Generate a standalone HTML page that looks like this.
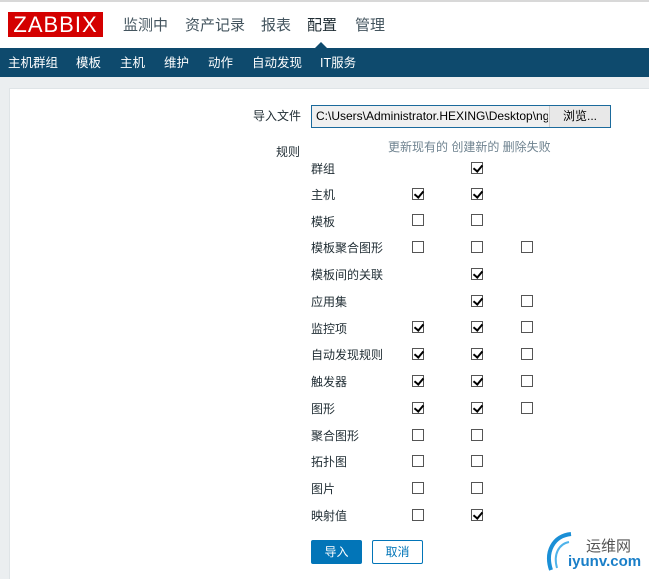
<!DOCTYPE html>
<html><head><meta charset="utf-8"><style>
*{margin:0;padding:0;box-sizing:border-box}
body{width:649px;height:579px;overflow:hidden;background:#ebeef0;font-family:"Liberation Sans","Noto Sans CJK SC",sans-serif;font-size:12px;color:#1f2c33;position:relative}
.a{position:absolute;white-space:nowrap}
.top{position:absolute;left:0;top:0;width:649px;height:48px;background:#fff;border-top:2px solid #d8d8d8}
.logo{left:8px;top:12px;width:95px;height:25px;background:#d40000;color:#fff;font-size:22px;line-height:25px;text-align:center;letter-spacing:1px}
.m{top:14px;font-size:15px;color:#44555f}
.nav{position:absolute;left:0;top:48px;width:649px;height:29px;background:#0e4a6d}
.n{top:52px;color:#fff;font-size:12.5px}
.panel{position:absolute;left:9px;top:88px;width:640px;height:491px;background:#fff;border:1px solid #dfe4e7;border-right:none;border-bottom:none}
.cb{position:absolute;width:12px;height:12px;border:1px solid #555;background:#fff}
.cb.c::after{content:"";position:absolute;left:3px;top:0px;width:4px;height:7px;border:solid #000;border-width:0 2px 2px 0;transform:rotate(40deg)}
.l{left:311px;margin-top:-2px}
</style></head><body>
<div class="top"></div>
<div class="a logo">ZABBIX</div>
<div class="a m" style="left:123px">监测中</div>
<div class="a m" style="left:185px">资产记录</div>
<div class="a m" style="left:261px">报表</div>
<div class="a m" style="left:307px;color:#1f2c33">配置</div>
<div class="a m" style="left:355px">管理</div>
<div class="nav"></div>
<div class="a" style="left:315px;top:42px;width:0;height:0;border-left:6px solid transparent;border-right:6px solid transparent;border-bottom:6px solid #0e4a6d"></div>
<div class="a n" style="left:8px">主机群组</div>
<div class="a n" style="left:76px">模板</div>
<div class="a n" style="left:120px">主机</div>
<div class="a n" style="left:164px">维护</div>
<div class="a n" style="left:208px">动作</div>
<div class="a n" style="left:252px">自动发现</div>
<div class="a n" style="left:320px">IT服务</div>
<div class="panel"></div>
<div class="a" style="left:253px;top:107px">导入文件</div>
<div class="a" style="left:311px;top:105px;width:300px;height:23px;border:1px solid #1b6a9c;background:#f0f0f0"></div>
<div class="a" style="left:316px;top:109px;width:232px;overflow:hidden;font-size:12px;color:#000">C:\Users\Administrator.HEXING\Desktop\ng</div>
<div class="a" style="left:549px;top:106px;width:61px;height:21px;background:#e8e8e8;border-left:1px solid #ccc;text-align:center;line-height:21px;color:#000">浏览...</div>
<div class="a" style="left:276px;top:143px">规则</div>
<div class="a" style="left:388px;top:138px;color:#6f8390">更新现有的 创建新的 删除失败</div>
<div class="a l" style="top:162px">群组</div>
<div class="a l" style="top:188px">主机</div>
<div class="a l" style="top:215px">模板</div>
<div class="a l" style="top:241px">模板聚合图形</div>
<div class="a l" style="top:268px">模板间的关联</div>
<div class="a l" style="top:295px">应用集</div>
<div class="a l" style="top:322px">监控项</div>
<div class="a l" style="top:348px">自动发现规则</div>
<div class="a l" style="top:375px">触发器</div>
<div class="a l" style="top:402px">图形</div>
<div class="a l" style="top:429px">聚合图形</div>
<div class="a l" style="top:455px">拓扑图</div>
<div class="a l" style="top:482px">图片</div>
<div class="a l" style="top:509px">映射值</div>
<div class="cb c" style="left:471px;top:162px"></div>
<div class="cb c" style="left:412px;top:188px"></div><div class="cb c" style="left:471px;top:188px"></div>
<div class="cb" style="left:412px;top:214px"></div><div class="cb" style="left:471px;top:214px"></div>
<div class="cb" style="left:412px;top:241px"></div><div class="cb" style="left:471px;top:241px"></div><div class="cb" style="left:521px;top:241px"></div>
<div class="cb c" style="left:471px;top:268px"></div>
<div class="cb c" style="left:471px;top:295px"></div><div class="cb" style="left:521px;top:295px"></div>
<div class="cb c" style="left:412px;top:321px"></div><div class="cb c" style="left:471px;top:321px"></div><div class="cb" style="left:521px;top:321px"></div>
<div class="cb c" style="left:412px;top:348px"></div><div class="cb c" style="left:471px;top:348px"></div><div class="cb" style="left:521px;top:348px"></div>
<div class="cb c" style="left:412px;top:375px"></div><div class="cb c" style="left:471px;top:375px"></div><div class="cb" style="left:521px;top:375px"></div>
<div class="cb c" style="left:412px;top:402px"></div><div class="cb c" style="left:471px;top:402px"></div><div class="cb" style="left:521px;top:402px"></div>
<div class="cb" style="left:412px;top:429px"></div><div class="cb" style="left:471px;top:429px"></div>
<div class="cb" style="left:412px;top:455px"></div><div class="cb" style="left:471px;top:455px"></div>
<div class="cb" style="left:412px;top:482px"></div><div class="cb" style="left:471px;top:482px"></div>
<div class="cb" style="left:412px;top:509px"></div><div class="cb c" style="left:471px;top:509px"></div>
<div class="a" style="left:311px;top:540px;width:51px;height:24px;background:#0275b8;color:#fff;text-align:center;line-height:24px;border-radius:2px">导入</div>
<div class="a" style="left:372px;top:540px;width:51px;height:24px;border:1px solid #0275b8;color:#0275b8;background:#fff;text-align:center;line-height:22px;border-radius:2px">取消</div>
<svg class="a" style="left:545px;top:530px" width="30" height="45" viewBox="0 0 30 45"><path d="M26 4 C8 6 0 22 6 40" stroke="#1a8fd6" stroke-width="4" fill="none"/><path d="M24 12 C14 14 8 24 12 38" stroke="#4fb3ea" stroke-width="2" fill="none"/></svg>
<div class="a" style="left:586px;top:535px;font-size:15px;color:#555">运维网</div>
<div class="a" style="left:568px;top:553px;font-size:15px;color:#1a7fc8;font-weight:bold">iyunv.com</div>
</body></html>
